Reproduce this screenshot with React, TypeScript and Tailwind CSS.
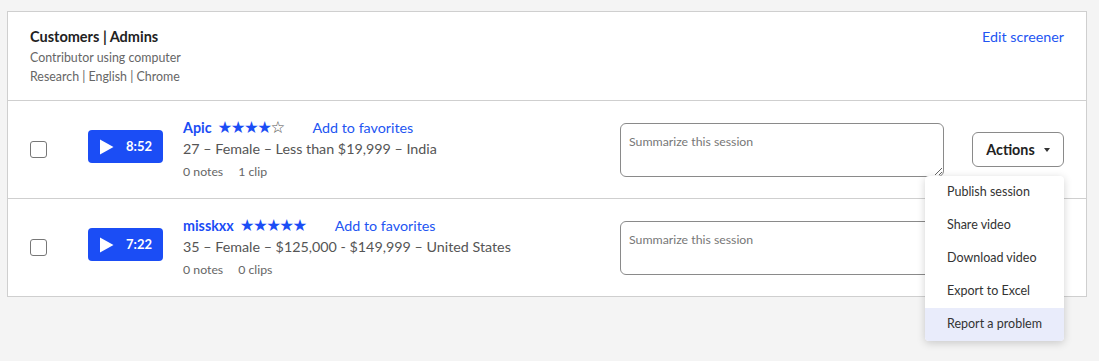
import React from 'react';

const font = { fontFamily: 'Lato, "Noto Sans", sans-serif' };

type Session = {
  name: string;
  stars: number;
  time: string;
  info: string;
  notes: string;
  clips: string;
  menu?: boolean;
};

const sessions: Session[] = [
  { name: 'Apic', stars: 4, time: '8:52', info: '27 – Female – Less than $19,999 – India', notes: '0 notes', clips: '1 clip', menu: true },
  { name: 'misskxx', stars: 5, time: '7:22', info: '35 – Female – $125,000 - $149,999 – United States', notes: '0 notes', clips: '0 clips' },
];

const menuItems = ['Publish session', 'Share video', 'Download video', 'Export to Excel', 'Report a problem'];

const Stars = ({ count }: { count: number }) => (
  <span className="flex text-[16.5px] leading-none tracking-[-1.6px]" style={{ fontFamily: '"DejaVu Sans", sans-serif' }}>
    {[0, 1, 2, 3, 4].map((i) =>
      i < count ? (
        <span key={i} className="text-[#1b4df5]">★</span>
      ) : (
        <span key={i} className="text-[#555]">☆</span>
      )
    )}
  </span>
);

const Row = ({ s }: { s: Session }) => (
  <div className="flex items-center border-t border-[#cfcfcf] h-[98px] pl-[22px] pr-[22px]">
    <div className="w-[17px] h-[17px] rounded-[3px] border border-[#777] bg-white shrink-0" />
    <button className="ml-[41px] mb-[6px] w-[75px] h-[33px] rounded-[4px] bg-[#1b4df5] text-white flex items-center justify-center gap-[12px] shrink-0">
      <svg width="15" height="16" viewBox="0 0 15 16">
        <path d="M1 0.5 L14.5 8 L1 15.5 Z" fill="white" />
      </svg>
      <span className="text-[13px] font-bold">{s.time}</span>
    </button>
    <div className="ml-[20px] flex flex-col w-[437px]">
      <div className="flex items-center h-[20px]">
        <span className="text-[14.3px] font-bold text-[#1b4df5]">{s.name}</span>
        <span className="ml-[6px]">
          <Stars count={s.stars} />
        </span>
        <span className="ml-[29px] text-[14.3px] text-[#2255f2]">Add to favorites</span>
      </div>
      <div className="mt-[1px] h-[20px] leading-[20px] text-[14.3px] text-[#555]">{s.info}</div>
      <div className="mt-[4px] flex gap-[15px] h-[18px] leading-[18px] text-[12.3px] text-[#666]">
        <span>{s.notes}</span>
        <span>{s.clips}</span>
      </div>
    </div>
    <textarea
      placeholder="Summarize this session"
      className="w-[324px] h-[54px] rounded-[6px] border border-[#8a8a8a] px-[8px] pt-[9px] text-[12.3px] placeholder-[#777] bg-white outline-none"
      style={font}
    />
    <div className="ml-auto relative">
      <button className="w-[92px] h-[35px] rounded-[6px] border border-[#8a8a8a] bg-white flex items-center justify-center gap-[9px]">
        <span className="text-[14.3px] font-bold text-[#222]">Actions</span>
        <svg width="6" height="4" viewBox="0 0 6 4">
          <path d="M0 0 L6 0 L3 4 Z" fill="#333" />
        </svg>
      </button>
      {s.menu && (
        <div className="absolute right-0 top-full mt-[9px] w-[139px] bg-white rounded-[4px] shadow-[0_2px_8px_rgba(0,0,0,0.18)] z-10 overflow-hidden">
          {menuItems.map((m, i) => (
            <div
              key={m}
              className={
                'h-[33px] flex items-center pl-[22px] text-[12.5px] text-[#333] ' +
                (i === menuItems.length - 1 ? 'bg-[#e9ecfb]' : '')
              }
            >
              {m}
            </div>
          ))}
        </div>
      )}
    </div>
  </div>
);

export default function App() {
  return (
    <div className="w-[1099px] h-[361px] bg-[#f4f4f4] pt-[11px] pl-[7px]" style={font}>
      <div className="w-[1080px] bg-white border border-[#cfcfcf]">
        <div className="flex justify-between pl-[22px] pr-[22px] pt-[15px] h-[88px]">
          <div className="flex flex-col">
            <div className="text-[14.5px] font-bold text-[#222] leading-[20px]">Customers | Admins</div>
            <div className="text-[12.4px] text-[#666] leading-[19px] mt-[1px]">Contributor using computer</div>
            <div className="text-[12.4px] text-[#666] leading-[19px]">Research | English | Chrome</div>
          </div>
          <div className="text-[14.3px] text-[#2255f2] leading-[20px]">Edit screener</div>
        </div>
        {sessions.map((s) => (
          <Row key={s.name} s={s} />
        ))}
      </div>
    </div>
  );
}
